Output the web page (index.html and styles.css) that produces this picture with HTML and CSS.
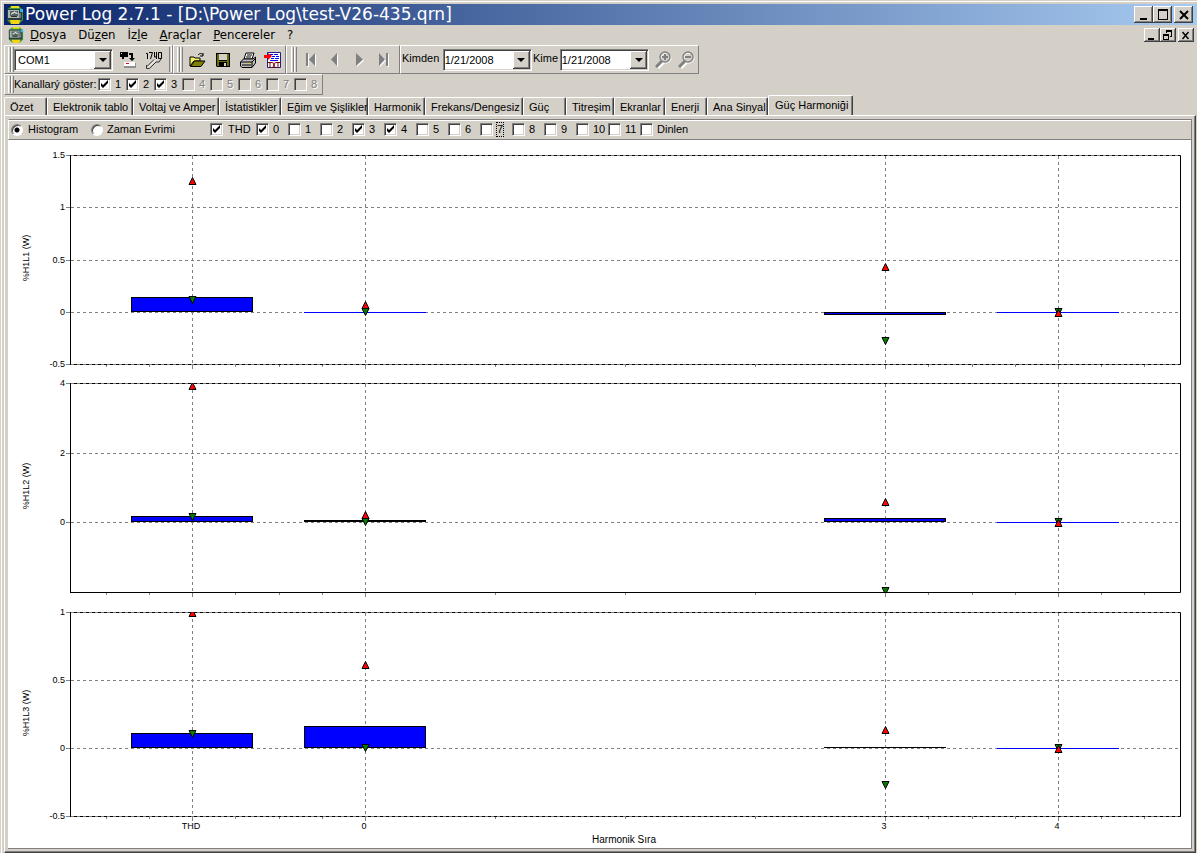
FILE: index.html
```html
<!DOCTYPE html>
<html lang="tr">
<head>
<meta charset="utf-8">
<title>Power Log 2.7.1</title>
<link rel="stylesheet" href="styles.css">
</head>
<body>
<svg class="defs" width="0" height="0" aria-hidden="true">
  <defs>
    <symbol id="app" viewBox="0 0 18 18">
      <path d="M5 0h8l4 4v10l-4 4H5l-4-4V4z" fill="#3f9a3a"/>
      <path d="M5 0h8v2H5z" fill="#e8e01c"/>
      <path d="M4 14h10l-1 4H5z" fill="#f2d616"/>
      <path d="M1 3h15v11H1z" fill="#2b3c40"/>
      <path d="M2 4h11v8H2z" fill="#a9b5b0"/>
      <path d="M4 5h8v5H4z" fill="#53645f"/>
      <path d="M5 8h1V7h2V6h1v1h2v1" stroke="#f0f4f0" fill="none"/>
      <path d="M5 10h6v1H5z" fill="#303028"/>
      <path d="M14 3h3v3h-3z" fill="#35b8e0"/>
      <path d="M13 7h2v5h-2z" fill="#6d7d80"/>
    </symbol>
    <symbol id="mag" viewBox="0 0 18 18">
      <circle cx="11" cy="7" r="5" fill="none" stroke="#fff" stroke-width="1"/>
      <path d="M3 17l6-6" stroke="#fff" stroke-width="3"/>
      <circle cx="10" cy="6" r="5" fill="none" stroke="#808080" stroke-width="1.4"/>
      <path d="M1 16l6-6" stroke="#808080" stroke-width="3"/>
    </symbol>
  </defs>
</svg>
<div class="window">
  <header class="titlebar">
    <svg class="app-icon" width="20" height="18"><use href="#app"/></svg>
    <h1>Power Log 2.7.1 - [D:\Power Log\test-V26-435.qrn]</h1>
    <div class="caption">
      <button class="cap" aria-label="Simge durumuna küçült"><svg width="14" height="14"><path d="M3 10h7v2H3z"/></svg></button>
      <button class="cap" aria-label="Ekranı kapla"><svg width="14" height="14"><path d="M2 1h10v11H2zM3 3v8h8V3z" fill-rule="evenodd"/></svg></button>
      <button class="cap close" aria-label="Kapat"><svg width="14" height="14"><path d="M3 3l8 8M11 3l-8 8" stroke="#000" stroke-width="2"/></svg></button>
    </div>
  </header>

  <nav class="menubar">
    <svg class="app-icon" width="16" height="16"><use href="#app"/></svg>
    <button><u>D</u>osya</button>
    <button>Dü<u>z</u>en</button>
    <button>İz<u>l</u>e</button>
    <button><u>A</u>raçlar</button>
    <button><u>P</u>encereler</button>
    <button>?</button>
    <div class="caption small">
      <button class="cap" aria-label="Pencereyi küçült"><svg width="12" height="11"><path d="M2 8h6v2H2z"/></svg></button>
      <button class="cap" aria-label="Önceki boyut"><svg width="12" height="11"><path d="M4 0h6v7H8V6h1V2H5v1H4zM1 4h6v6H1zM2 6v3h4V6z" fill-rule="evenodd"/></svg></button>
      <button class="cap close" aria-label="Pencereyi kapat"><svg width="12" height="11"><path d="M2.500 2l6 7M8.500 2l-6 7" stroke="#000" stroke-width="1.500"/></svg></button>
    </div>
  </nav>

  <div class="toolbars">
    <div class="band band-port">
      <i class="grip"></i>
      <span class="combo port">
        <select aria-label="Bağlantı noktası"><option>COM1</option></select>
        <span class="drop"></span>
      </span>
      <button class="tool" aria-label="Aktar"><svg width="18" height="18"><path d="M1 1h8v5H5v2H3V6H1z" fill="#000"/><path d="M2 2h1v1H2z" fill="#d4d0c8"/><path d="M10 2h4v5h2l-3 3-3-3h2V4h-2z" fill="#000"/><path d="M5 11h11v4H5z" fill="#fff"/><path d="M5 15h12v2H5zM16 12h1v4h-1z" fill="#909090"/><path d="M7 12h3v1H7z" fill="#f00"/></svg></button>
      <button class="tool" aria-label="Ayarlar"><svg width="18" height="18" fill="none" stroke="#000"><path d="M1 2.500h1.500V8M4 1.500h3.500L5.500 8M9.500 1v5h2M11.500 1v7M13.500 1.500h3v6h-3z"/><path d="M2 15.500l7-7M4.500 17.500l6.500-6.500h3l2-3M1.500 14v3.500h3" stroke="#303030"/><path d="M3 16.500l8-8" stroke="#fff"/></svg></button>
      <i class="divider"></i>
    </div>
    <div class="band band-file">
      <i class="grip"></i>
      <button class="tool" aria-label="Aç"><svg width="18" height="18"><path d="M1 15V6h4l1 1h5v3H5z" fill="#f2ee6a" stroke="#000"/><path d="M1.500 15.500l4-5.500H16l-4 5.500z" fill="#808000" stroke="#000"/><path d="M9 4c2-2 4-2 5 0m0-2v3h-3" fill="none" stroke="#000"/></svg></button>
      <button class="tool" aria-label="Kaydet"><svg width="18" height="18"><path d="M2 2h14v14H3l-1-1z" fill="#000"/><path d="M3 3h2v7h8V3h2v12h-2v-4H5v4H3z" fill="#6b6b00"/><path d="M5 3h8v6H5z" fill="#d4d0c8"/><path d="M10 12h2v3h-2z" fill="#d4d0c8"/></svg></button>
      <button class="tool" aria-label="Yazdır"><svg width="18" height="18"><path d="M5 8l2-6h8l-2 6z" fill="#fff" stroke="#000"/><path d="M8 4h5M7 6h5" stroke="#000"/><path d="M1.500 11l3-3H14l2.500-2v6L13 16.500H3L1.500 15z" fill="#bdbdbd" stroke="#000"/><path d="M2 11h11l3-3M13 11v5M3 14h9" stroke="#000" fill="none"/><path d="M9 12h2v1H9z" fill="#e6d800"/></svg></button>
      <button class="tool" aria-label="Metne aktar"><svg width="18" height="18"><path d="M3.500 1.500h13v15h-13z" fill="#fff" stroke="#222080"/><path d="M6 3.500h3m1 0h4M8 5.500h3m1 0h3M7 7.500h3m1 0h4M6 9.500h8" stroke="#00f"/><path d="M0 4h4V2l4 3-4 4V7H0z" fill="#f00"/><path d="M4 11.500h4M6 11v6M8.500 11l3 6M11.500 11l-3 6M12 11.500h4M14 11v6" stroke="#800000" fill="none"/></svg></button>
    </div>
    <div class="band band-nav">
      <i class="grip"></i>
      <button class="tool" disabled aria-label="İlk"><svg width="18" height="18"><path d="M5 3h2v13H5zM14 3v13L8 9.500z" fill="#fff"/><path d="M4 2h2v13H4zM13 2v13L7 8.500z" fill="#808080"/></svg></button>
      <button class="tool" disabled aria-label="Önceki"><svg width="18" height="18"><path d="M12 3v13L6 9.500z" fill="#fff"/><path d="M11 2v13L5 8.500z" fill="#808080"/></svg></button>
      <button class="tool" disabled aria-label="Sonraki"><svg width="18" height="18"><path d="M7 3v13l7-6.500z" fill="#fff"/><path d="M6 2v13l7-6.500z" fill="#808080"/></svg></button>
      <button class="tool" disabled aria-label="Son"><svg width="18" height="18"><path d="M13 3h2v13h-2zM6 3v13l6-6.500z" fill="#fff"/><path d="M12 2h2v13h-2zM5 2v13l6-6.500z" fill="#808080"/></svg></button>
    </div>
    <div class="band band-range">
      <label for="from">Kimden</label>
      <span class="combo date">
        <select id="from"><option>1/21/2008</option></select>
        <span class="drop"></span>
      </span>
      <label for="to">Kime</label>
      <span class="combo date">
        <select id="to"><option>1/21/2008</option></select>
        <span class="drop"></span>
      </span>
      <button class="tool" disabled aria-label="Yakınlaştır"><svg width="18" height="18"><use href="#mag"/><path d="M7 6h6M10 3v6" stroke="#808080" stroke-width="2"/></svg></button>
      <button class="tool" disabled aria-label="Uzaklaştır"><svg width="18" height="18"><use href="#mag"/><path d="M7 6h6" stroke="#808080" stroke-width="2"/></svg></button>
    </div>
  </div>

  <div class="toolbars">
    <div class="band channels">
      <i class="grip"></i>
      <span class="caption-text">Kanallarý göster:</span>
      <label class="check"><input type="checkbox" checked>1</label>
      <label class="check"><input type="checkbox" checked>2</label>
      <label class="check"><input type="checkbox" checked>3</label>
      <label class="check off"><input type="checkbox" disabled>4</label>
      <label class="check off"><input type="checkbox" disabled>5</label>
      <label class="check off"><input type="checkbox" disabled>6</label>
      <label class="check off"><input type="checkbox" disabled>7</label>
      <label class="check off"><input type="checkbox" disabled>8</label>
    </div>
  </div>

  <div class="tabs" role="tablist">
    <button role="tab">Özet</button>
    <button role="tab">Elektronik tablo</button>
    <button role="tab">Voltaj ve Amper</button>
    <button role="tab">İstatistikler</button>
    <button role="tab">Eğim ve Şişlikler</button>
    <button role="tab">Harmonik</button>
    <button role="tab">Frekans/Dengesiz</button>
    <button role="tab">Güç</button>
    <button role="tab">Titreşim</button>
    <button role="tab">Ekranlar</button>
    <button role="tab">Enerji</button>
    <button role="tab">Ana Sinyal</button>
    <button role="tab" class="active" aria-selected="true">Güç Harmoniği</button>
  </div>

  <main class="pane">
    <form class="options">
      <label class="radio histogram"><input type="radio" name="view" checked>Histogram</label>
      <label class="radio trend"><input type="radio" name="view">Zaman Evrimi</label>
      <label class="check thd"><input type="checkbox" checked>THD</label>
      <label class="check"><input type="checkbox" checked>0</label>
      <label class="check"><input type="checkbox">1</label>
      <label class="check"><input type="checkbox">2</label>
      <label class="check"><input type="checkbox" checked>3</label>
      <label class="check"><input type="checkbox" checked>4</label>
      <label class="check"><input type="checkbox">5</label>
      <label class="check"><input type="checkbox">6</label>
      <label class="check"><input type="checkbox"><span class="focused">7</span></label>
      <label class="check"><input type="checkbox">8</label>
      <label class="check"><input type="checkbox">9</label>
      <label class="check"><input type="checkbox">10</label>
      <label class="check"><input type="checkbox">11</label>
      <label class="check"><input type="checkbox">Dinlen</label>
    </form>
    <div class="chart">
      <svg viewBox="8 140 1183 708" role="img" aria-label="Güç harmoniği histogramı">
        <defs>
          <path id="max" d="M0-3.500L3.500 3.500h-7z" fill="#f00" stroke="#000"/>
          <path id="min" d="M0 3.500L3.500-3.500h-7z" fill="#008000" stroke="#000"/>
          <clipPath id="clip2"><path d="M60 383h1130v209H60z"/></clipPath>
          <clipPath id="clip3"><path d="M60 612h1130v205H60z"/></clipPath>
          <g id="ticks" class="grid"><path d="M106.500 0v2M149.500 0v2M235.500 0v2M279.500 0v2M322.500 0v2M495.500 0v2M625.500 0v2M755.500 0v2M928.500 0v2M972.500 0v2M1015.500 0v2M1101.500 0v2M1144.500 0v2M192.500 0v4M365.500 0v4M885.500 0v4M1058.500 0v4"/></g>
        </defs>

        <g class="frame">
          <path d="M71 155.500h1109.500v209H71M71 383.500h1109.500v209H71M71 612.500h1109.500v204H71"/>
          <path d="M70.500 155v210M70.500 383v210M70.500 612v205"/>
        </g>
        <g class="grid dashed">
          <path d="M71 155.500h1109M71 207.500h1109M71 260.500h1109M71 312.500h1109M71 364.500h1109"/>
          <path d="M71 383.500h1109M71 453.500h1109M71 522.500h1109"/>
          <path d="M71 612.500h1109M71 680.500h1109M71 748.500h1109M71 816.500h1109"/>
          <path d="M192.500 156v208M365.500 156v208M885.500 156v208M1058.500 156v208"/>
          <path d="M192.500 384v208M365.500 384v208M885.500 384v208M1058.500 384v208"/>
          <path d="M192.500 613v203M365.500 613v203M885.500 613v203M1058.500 613v203"/>
        </g>
        <path class="grid" d="M66 155.500h4M66 207.500h4M66 260.500h4M66 312.500h4M66 364.500h4M66 383.500h4M66 453.500h4M66 522.500h4M66 612.500h4M66 680.500h4M66 748.500h4M66 816.500h4"/>
        <use href="#ticks" y="365"/>
        <use href="#ticks" y="593"/>
        <use href="#ticks" y="817"/>

        <g class="bars">
          <rect x="131.500" y="297.500" width="121" height="14"/>
          <rect x="824.500" y="312.500" width="121" height="2"/>
          <rect x="131.500" y="516.500" width="121" height="5"/>
          <rect x="304.500" y="520.500" width="121" height="1"/>
          <rect x="824.500" y="518.500" width="121" height="3"/>
          <rect x="131.500" y="733.500" width="121" height="14"/>
          <rect x="304.500" y="726.500" width="121" height="21"/>
          <path d="M824 747.500h122"/>
          <path class="flat" d="M304 312.500h122M997 312.500h122M997 522.500h122M997 748.500h122"/>
        </g>

        <use href="#max" x="192.500" y="181"/><use href="#min" x="192.500" y="300"/>
        <use href="#max" x="365.500" y="305"/><use href="#min" x="365.500" y="312"/>
        <use href="#max" x="885.500" y="267"/><use href="#min" x="885.500" y="341"/>
        <use href="#min" x="1058.500" y="312"/><use href="#max" x="1058.500" y="313"/>
        <g clip-path="url(#clip2)">
          <use href="#max" x="192.500" y="386"/><use href="#min" x="192.500" y="517"/>
          <use href="#max" x="365.500" y="515"/><use href="#min" x="365.500" y="522"/>
          <use href="#max" x="885.500" y="502"/><use href="#min" x="885.500" y="591"/>
          <use href="#min" x="1058.500" y="522"/><use href="#max" x="1058.500" y="523"/>
        </g>
        <g clip-path="url(#clip3)">
          <use href="#max" x="192.500" y="613"/><use href="#min" x="192.500" y="734"/>
          <use href="#max" x="365.500" y="665"/><use href="#min" x="365.500" y="748"/>
          <use href="#max" x="885.500" y="730"/><use href="#min" x="885.500" y="785"/>
          <use href="#min" x="1058.500" y="748"/><use href="#max" x="1058.500" y="749"/>
        </g>

        <g class="scale">
          <text x="65" y="158">1.5</text><text x="65" y="210">1</text><text x="65" y="263">0.5</text><text x="65" y="315">0</text><text x="65" y="367">-0.5</text>
          <text x="65" y="386">4</text><text x="65" y="456">2</text><text x="65" y="525">0</text>
          <text x="65" y="615">1</text><text x="65" y="683">0.5</text><text x="65" y="751">0</text><text x="65" y="819">-0.5</text>
        </g>
        <g class="names">
          <text x="191" y="829">THD</text><text x="364" y="829">0</text><text x="884" y="829">3</text><text x="1057" y="829">4</text>
          <text transform="translate(29 258) rotate(-90)">%H1L1 (W)</text>
          <text transform="translate(29 486) rotate(-90)">%H1L2 (W)</text>
          <text transform="translate(29 713) rotate(-90)">%H1L3 (W)</text>
          <text class="axis-title" x="624" y="843">Harmonik Sıra</text>
        </g>
      </svg>
    </div>
  </main>
</div>
</body>
</html>
```

FILE: styles.css
```css
* { box-sizing: border-box; }

body {
  margin: 0;
  background: #d4d0c8;
  color: #000;
  font: 11px/13px "Liberation Sans", Arial, sans-serif;
}

button, select, input { font: inherit; color: inherit; margin: 0; }
button { padding: 0; border: 0; background: none; }
.defs { position: absolute; }

.window {
  min-height: 100vh;
  display: flex;
  flex-direction: column;
  padding: 4px 0 0 4px;
  background: #d4d0c8;
  box-shadow: inset 1px 1px #d4d0c8, inset 2px 2px #fff;
}

.titlebar {
  display: flex;
  align-items: center;
  height: 21px;
  padding: 0 4px 0 1px;
  background: linear-gradient(to right, #0a246a, #a6caf0);
}
.titlebar h1 {
  margin: 0 auto 0 0;
  color: #fff;
  font: 17px/21px "DejaVu Sans", Verdana, sans-serif;
  white-space: nowrap;
}
.app-icon { flex: none; }

.caption { display: flex; }
.cap {
  display: grid;
  place-items: center;
  width: 19px;
  height: 17px;
  background: #d4d0c8;
  box-shadow: inset -1px -1px #404040, inset 1px 1px #fff, inset -2px -2px #808080;
}
.cap.close { margin-left: 2px; }
.small .cap { width: 16px; height: 14px; }

.menubar {
  display: flex;
  align-items: center;
  height: 20px;
  padding: 0 3px 0 4px;
  font: 13px/18px "DejaVu Sans Condensed", "DejaVu Sans", Tahoma, sans-serif;
}
.menubar > button { padding: 0 6px; }
.menubar .caption { margin-left: auto; }

.toolbars { display: flex; flex-wrap: wrap; margin-right: 4px; }
.band {
  display: flex;
  align-items: center;
  height: 29px;
  border: 1px solid;
  border-color: #fff #808080 #808080 #fff;
}
.band-port { width: 169px; padding-left: 3px; }
.band-file { width: 113px; padding-left: 3px; }
.band-nav { width: 114px; padding-left: 4px; }
.band-range { width: 299px; padding-left: 1px; }

.grip {
  flex: none;
  width: 6px;
  height: 25px;
  background: linear-gradient(to right, #fff 0 1px, #d4d0c8 1px 2px, #808080 2px 3px, #fff 3px 4px, #d4d0c8 4px 5px, #808080 5px 6px);
}
.divider { width: 3px; height: 25px; margin-left: 2px; border-left: 1px solid #808080; border-right: 1px solid #fff; }

.tool {
  display: grid;
  place-items: center;
  flex: none;
  width: 25px;
  height: 24px;
}
.band-port .tool { width: 26px; }
.band-port .combo { margin-right: 2px; }
.band-file .tool:first-of-type, .band-nav .tool:first-of-type { margin-left: 2px; }
.band-nav .tool { width: 24px; }
.band-range .tool { width: 23px; }

.combo { display: grid; height: 22px; }
.combo > * { grid-area: 1 / 1; }
.combo select {
  appearance: none;
  width: 100%;
  padding: 0 18px 0 3px;
  border: 1px solid;
  border-color: #808080 #fff #fff #808080;
  border-radius: 0;
  background: #fff;
  box-shadow: inset 1px 1px #404040, inset -1px -1px #d4d0c8;
  line-height: 18px;
}
.port { width: 100px; }
.date { width: 90px; }
.date select { padding-left: 1px; }
.drop {
  justify-self: end;
  display: grid;
  place-items: center;
  width: 17px;
  margin: 2px;
  background: #d4d0c8;
  box-shadow: inset -1px -1px #404040, inset 1px 1px #fff, inset -2px -2px #808080;
  pointer-events: none;
}
.drop::after { content: ""; border: 4px solid transparent; border-top-color: #000; border-bottom: 0; }
.band-range label { white-space: nowrap; padding-bottom: 3px; }
.band-range label:first-child { width: 41px; }
.band-range .combo { margin-right: 1px; }
.band-range label:nth-of-type(2) { width: 27px; }
.band-range .tool:first-of-type { margin-left: 2px; }

.check, .radio { display: flex; align-items: center; gap: 4px; white-space: nowrap; }
input[type="checkbox"], input[type="radio"] { appearance: none; flex: none; width: 13px; height: 13px; }
input[type="checkbox"] {
  background: #fff center / 9px 9px no-repeat;
  border: 1px solid;
  border-color: #808080 #fff #fff #808080;
  box-shadow: inset 1px 1px #404040, inset -1px -1px #d4d0c8;
}
input[type="checkbox"]:checked {
  background-image: url("data:image/svg+xml,%3Csvg xmlns='http://www.w3.org/2000/svg' viewBox='0 0 9 9'%3E%3Cpath d='M1 3v3l2 2 5-5V0L3 5z'/%3E%3C/svg%3E");
}
input[type="checkbox"]:disabled { background-color: #d4d0c8; }
input[type="radio"] {
  width: 12px;
  height: 12px;
  border: 1px solid;
  border-color: #808080 #fff #fff #808080;
  border-radius: 50%;
  background: #fff;
  box-shadow: inset 1px 1px #404040;
}
input[type="radio"]:checked { background: radial-gradient(circle, #000 2px, #fff 3px); }
.off { color: #808080; text-shadow: 1px 1px #fff; }

.channels { height: 21px; padding-left: 3px; }
.channels .grip { height: 17px; }
.caption-text { width: 84px; white-space: nowrap; }
.channels .check { width: 28px; }

.tabs {
  display: grid;
  grid-template-columns: 43px 86px 86px 62px 87px 57px 98px 43px 48px 51px 42px 61px 85px;
  align-items: end;
  height: 20px;
}
.tabs button {
  height: 18px;
  overflow: hidden;
  padding: 1px 0 0 5px;
  border: solid;
  border-width: 1px 1px 0;
  border-color: #fff #404040 #fff #fff;
  border-radius: 2px 2px 0 0;
  box-shadow: inset -1px 0 #808080;
  text-align: left;
  white-space: nowrap;
}
.tabs .active { height: 20px; padding: 0 0 1px 6px; }

.pane {
  flex: 1;
  display: flex;
  flex-direction: column;
  margin-right: 1px;
  padding: 3px;
  border: 1px solid;
  border-color: #fff #404040 #404040 #fff;
  box-shadow: inset -1px -1px #808080;
}
.options {
  display: flex;
  align-items: center;
  height: 21px;
  padding-left: 2px;
  border: 1px solid #808080;
  border-left-color: #fff;
  box-shadow: inset 0 1px #fff;
}
.options .check { width: 32px; }
.options .histogram { width: 80px; gap: 5px; }
.options .trend { width: 119px; }
.options .thd { width: 46px; gap: 5px; }
.focused { outline: 1px dotted #000; }

.chart {
  flex: 1;
  background: #fff;
  border: solid #808080;
  border-width: 0 1px 1px 0;
}
.chart svg { display: block; width: 100%; height: auto; }
.frame { fill: none; stroke: #000; }
.grid { fill: none; stroke: #808080; }
.dashed { stroke-dasharray: 3 3; }
.bars { fill: #00f; stroke: #000; }
.bars .flat { stroke: #00f; }
.scale { font-size: 9px; text-anchor: end; }
.names { font-size: 9px; text-anchor: middle; }
.names .axis-title { font-size: 10px; }
```
